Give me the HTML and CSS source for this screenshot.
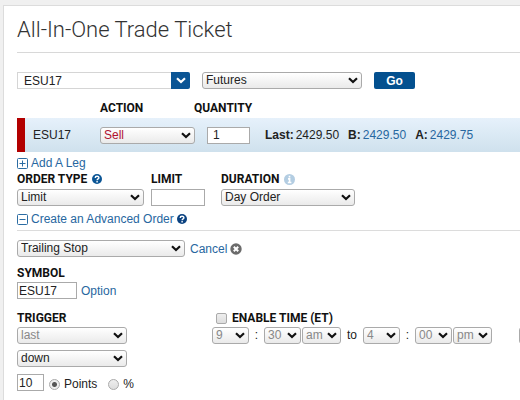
FILE: index.html
```html
<!DOCTYPE html>
<html lang="en">
<head>
	<meta charset="UTF-8">
	<title>All-In-One Trade Ticket</title>
	<link rel="stylesheet" href="styles.css">
</head>
<body>
	<main class="ticket">
		<h1>All-In-One Trade Ticket</h1>
		<form>
			<div class="row lookup">
				<div class="combo">
					<input type="text" value="ESU17" aria-label="Symbol lookup">
					<button type="button" aria-label="Show symbols">
						<svg width="10" height="7" viewBox="0 0 10 7"><path d="M1 1.2 5 5 9 1.2" fill="none" stroke="#fff" stroke-width="2.2"/></svg>
					</button>
				</div>
				<select class="w-market" aria-label="Market"><option>Futures</option></select>
				<button type="submit" class="go">Go</button>
			</div>

			<div class="leg-grid leg-head">
				<label class="leg-action" for="action">ACTION</label>
				<label for="quantity">QUANTITY</label>
			</div>
			<div class="leg-grid leg">
				<span>ESU17</span>
				<select id="action" class="sell"><option>Sell</option></select>
				<input id="quantity" class="quantity" type="text" value="1">
				<div class="quote">
					<span><b>Last:</b> 2429.50</span>
					<span><b>B:</b> <a href="#">2429.50</a></span>
					<span><b>A:</b> <a href="#">2429.75</a></span>
				</div>
			</div>

			<div class="toggle">
				<svg width="11" height="11" viewBox="0 0 11 11"><g fill="none" stroke="#2b6ca3"><rect x=".5" y=".5" width="10" height="10" rx="1"/><path d="M2.5 5.5h6M5.5 2.5v6"/></g></svg>
				<a href="#">Add A Leg</a>
			</div>

			<div class="row order">
				<div class="field w-type">
					<div class="caption">
						<label for="type">ORDER TYPE</label>
						<svg width="10" height="10" viewBox="0 0 10 10"><circle cx="5" cy="5" r="5" fill="#0b5595"/><path d="M3.2 3.9C3.2 1.6 6.9 1.7 6.9 3.7 6.9 4.9 5.1 4.8 5.1 6.3M5.1 7.1v1.4" fill="none" stroke="#fff" stroke-width="1.4"/></svg>
					</div>
					<select id="type"><option>Limit</option></select>
				</div>
				<div class="field w-limit">
					<div class="caption"><label for="limit">LIMIT</label></div>
					<input id="limit" type="text">
				</div>
				<div class="field w-duration">
					<div class="caption">
						<label for="duration">DURATION</label>
						<svg width="11" height="11" viewBox="0 0 11 11"><circle cx="5.5" cy="5.5" r="5.5" fill="#b3cde2"/><path d="M5.5 1.8v1.7M4 4.9h1.6v3.4M3.8 8.5h3.6" fill="none" stroke="#fff" stroke-width="1.6"/></svg>
					</div>
					<select id="duration"><option>Day Order</option></select>
				</div>
			</div>

			<div class="toggle advanced">
				<svg width="11" height="11" viewBox="0 0 11 11"><g fill="none" stroke="#2b6ca3"><rect x=".5" y=".5" width="10" height="10" rx="1"/><path d="M2.5 5.5h6"/></g></svg>
				<a href="#">Create an Advanced Order</a>
				<svg width="10" height="10" viewBox="0 0 10 10"><circle cx="5" cy="5" r="5" fill="#0b4280"/><path d="M3.2 3.9C3.2 1.6 6.9 1.7 6.9 3.7 6.9 4.9 5.1 4.8 5.1 6.3M5.1 7.1v1.4" fill="none" stroke="#fff" stroke-width="1.4"/></svg>
			</div>

			<div class="row strategy">
				<select class="w-strategy" aria-label="Strategy"><option>Trailing Stop</option></select>
				<a class="cancel" href="#">Cancel
					<svg width="12" height="12" viewBox="0 0 12 12"><circle cx="6" cy="6" r="5.7" fill="#6b6b6b"/><path d="m3.8 3.8 4.4 4.4m0-4.4L3.8 8.2" stroke="#fff" stroke-width="2"/></svg>
				</a>
			</div>

			<div class="field symbol">
				<div class="caption"><label for="symbol">SYMBOL</label></div>
				<div class="row tight">
					<input id="symbol" class="w-symbol" type="text" value="ESU17">
					<a href="#">Option</a>
				</div>
			</div>

			<div class="conditions">
				<div class="field trigger">
					<div class="caption"><label for="trigger">TRIGGER</label></div>
					<select id="trigger" disabled><option>last</option></select>
					<select aria-label="Direction"><option>down</option></select>
					<div class="row amount">
						<input class="w-amount" type="text" value="10" aria-label="Amount">
						<label><input type="radio" name="unit" checked>Points</label>
						<label><input type="radio" name="unit">%</label>
					</div>
				</div>
				<div class="field">
					<div class="caption enable">
						<input id="enable" type="checkbox">
						<label for="enable">ENABLE TIME (ET)</label>
					</div>
					<div class="times">
						<select aria-label="Start hour" disabled><option>9</option></select>
						<span class="sep">:</span>
						<select aria-label="Start minute" disabled><option>30</option></select>
						<select class="meridiem" aria-label="Start am or pm" disabled><option>am</option></select>
						<span class="to">to</span>
						<select aria-label="End hour" disabled><option>4</option></select>
						<span class="sep">:</span>
						<select aria-label="End minute" disabled><option>00</option></select>
						<select class="meridiem" aria-label="End am or pm" disabled><option>pm</option></select>
					</div>
				</div>
				<div class="field next">
					<select aria-label="Condition" disabled><option></option></select>
				</div>
			</div>
		</form>
	</main>
</body>
</html>
```

FILE: styles.css
```css
*{
	box-sizing: border-box;
}
body{
	margin: 0;
	background-color: #f0f0f0;
	color: #222;
	font: 12px/16px "Liberation Sans", Arial, sans-serif;
}
.ticket{
	margin: 5px 0 0 3px;
	padding-left: 13px;
	min-height: calc(100vh - 5px);
	border: solid #dcdcdc;
	border-width: 1px 0 0 1px;
	background-color: #fff;
	overflow: hidden;
}
h1{
	margin: 0;
	padding-top: 2px;
	border-bottom: 1px solid #d8d8d8;
	color: #333;
	font: 300 22px/44px Roboto, sans-serif;
}
a{
	color: #2767a0;
	text-decoration: none;
}
svg{
	display: block;
	flex: none;
}
select,
input,
button{
	margin: 0;
	height: 17px;
	font: inherit;
	color: #222;
}
select{
	appearance: none;
	width: 100%;
	padding: 0 16px 0 3px;
	border: 1px solid #aaa;
	border-radius: 3px;
	background: url("data:image/svg+xml,%3Csvg xmlns='http://www.w3.org/2000/svg' width='10' height='7'%3E%3Cpath d='M1 1.2 5 5 9 1.2' fill='none' stroke='%23111' stroke-width='2.2'/%3E%3C/svg%3E") no-repeat right 3px center, linear-gradient(#fff, #eaeaea);
	line-height: 15px;
}
select:disabled{
	color: #888;
	opacity: 1;
}
input[type="text"]{
	width: 100%;
	padding: 0 1px;
	border: 1px solid #aaa;
	background-color: #fff;
}
input[type="radio"],
input[type="checkbox"]{
	appearance: none;
	flex: none;
	width: 11px;
	height: 11px;
	border: 1px solid #aaa;
	border-radius: 2px;
	background: linear-gradient(#eee, #ddd);
}
input[type="radio"]{
	border-radius: 50%;
}
input[type="radio"]:checked{
	background: radial-gradient(circle, #555 0 2px, #eee 3px);
}
.row{
	display: flex;
	align-items: center;
}
.tight{
	gap: 4px;
}

/* symbol lookup */
.lookup{
	gap: 12px;
	margin-top: 19px;
}
.combo{
	display: flex;
	width: 173px;
}
.combo input[type="text"]{
	flex: 1;
	min-width: 0;
	padding-left: 6px;
	border-color: #d5d5d5;
	border-right: 0;
}
.combo button{
	display: grid;
	place-items: center;
	width: 19px;
	padding: 0;
	border: 0;
	border-radius: 0 2px 2px 0;
	background-color: #0b5595;
}
.w-market{
	width: 160px;
}
.go{
	width: 41px;
	padding: 0;
	border: 0;
	border-radius: 2px;
	background-color: #03508f;
	color: #fff;
	font-weight: bold;
}

/* order leg */
.leg-grid{
	display: grid;
	grid-template-columns: 55px 95px 43px 1fr;
	column-gap: 12px;
	align-items: center;
	padding-left: 16px;
}
.leg-head,
.caption{
	color: #111;
	font: bold 12px/16px Roboto, sans-serif;
}
.leg-head{
	grid-template-columns: 55px 82px 1fr;
	margin: 11px 0 2px;
}
.leg-action{
	grid-column: 2;
}
.leg{
	height: 34px;
	padding-left: 8px;
	border-left: 8px solid #b20000;
	background: linear-gradient(#e6f1fb, #cfe1ed);
}
.leg .sell{
	color: #b01030;
}
.leg .quantity{
	padding-left: 5px;
}
.quote{
	display: flex;
	gap: 9px;
	padding-left: 3px;
	white-space: nowrap;
}
.quote span{
	display: flex;
	gap: 2px;
}
.toggle{
	display: flex;
	align-items: center;
	gap: 3px;
	padding-top: 3px;
}

/* order details */
.caption{
	display: flex;
	align-items: center;
	gap: 5px;
	margin-bottom: 1px;
}
.order{
	gap: 7px;
}
.w-type{
	width: 127px;
}
.w-limit{
	width: 54px;
}
.w-duration{
	width: 134px;
	margin-left: 9px;
}
.order .caption{
	margin-bottom: 2px;
}
.advanced{
	padding: 5px 0 3px;
	border-bottom: 1px solid #dcdcdc;
}
.strategy{
	gap: 5px;
	margin-top: 9px;
}
.w-strategy{
	width: 168px;
}
.cancel{
	display: flex;
	align-items: center;
	gap: 3px;
}
.symbol{
	margin-top: 8px;
}
.symbol .w-symbol{
	width: 60px;
}

/* trigger and time window */
.conditions{
	display: flex;
	gap: 27px;
	margin-top: 11px;
}
.field{
	flex: none;
}
.trigger{
	width: 168px;
}
.trigger select{
	display: block;
	width: 110px;
	margin-bottom: 6px;
}
.amount{
	gap: 5px;
}
.amount .w-amount{
	width: 27px;
}
.amount label{
	display: flex;
	align-items: center;
	gap: 4px;
	margin-right: 6px;
	padding-top: 3px;
}
.enable{
	padding-left: 4px;
}
.times{
	display: flex;
	gap: 1px;
}
.times select{
	width: 37px;
}
.times .meridiem{
	width: 39px;
}
.sep{
	width: 13px;
	text-align: center;
}
.to{
	width: 20px;
	text-align: center;
}
.next{
	width: 110px;
	padding-top: 17px;
}
```
